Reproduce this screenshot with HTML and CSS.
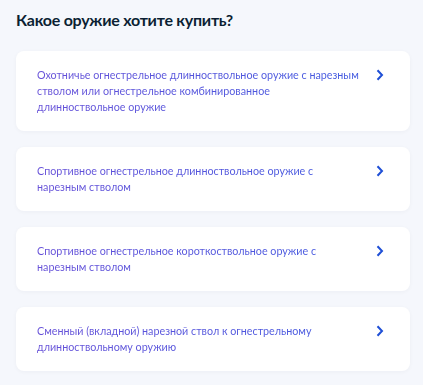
FILE: index.html
```html
<!DOCTYPE html>
<html lang="ru">
<head>
    <meta charset="UTF-8">
    <title>Какое оружие хотите купить?</title>
    <link rel="stylesheet" href="styles.css">
</head>
<body>
    <div class="page">
        <h1 class="title">Какое оружие хотите купить?</h1>
        <div class="options">
            <a class="option" href="#">
                <span class="option-text">Охотничье огнестрельное длинноствольное оружие с нарезным стволом или огнестрельное комбинированное длинноствольное оружие</span>
                <svg class="chevron" width="8" height="12" viewBox="0 0 8 12"><path d="M1.5 1.2 L6 6 L1.5 10.8" fill="none" stroke="#1f4fd6" stroke-width="2"/></svg>
            </a>
            <a class="option" href="#">
                <span class="option-text">Спортивное огнестрельное длинноствольное оружие с нарезным стволом</span>
                <svg class="chevron" width="8" height="12" viewBox="0 0 8 12"><path d="M1.5 1.2 L6 6 L1.5 10.8" fill="none" stroke="#1f4fd6" stroke-width="2"/></svg>
            </a>
            <a class="option" href="#">
                <span class="option-text">Спортивное огнестрельное короткоствольное оружие с нарезным стволом</span>
                <svg class="chevron" width="8" height="12" viewBox="0 0 8 12"><path d="M1.5 1.2 L6 6 L1.5 10.8" fill="none" stroke="#1f4fd6" stroke-width="2"/></svg>
            </a>
            <a class="option" href="#">
                <span class="option-text">Сменный (вкладной) нарезной ствол к огнестрельному длинноствольному оружию</span>
                <svg class="chevron" width="8" height="12" viewBox="0 0 8 12"><path d="M1.5 1.2 L6 6 L1.5 10.8" fill="none" stroke="#1f4fd6" stroke-width="2"/></svg>
            </a>
        </div>
    </div>
</body>
</html>
```
FILE: styles.css
```css
body {
    margin: 0;
    padding: 0;
    background-color: #f5f7fc;
    font-family: Lato, "Noto Sans", sans-serif;
    color: #0b1f33;
}

.page {
    padding: 9px 13px 14px 16px;
}

.title {
    margin: 0 0 20px 0;
    font-size: 16px;
    line-height: 22px;
    font-weight: 700;
    letter-spacing: -0.25px;
    color: #0b1f33;
}

.options {
    display: flex;
    flex-direction: column;
    gap: 16px;
}

.option {
    display: flex;
    align-items: flex-start;
    background: #fff;
    border-radius: 8px;
    padding: 16px 26px 16px 21px;
    text-decoration: none;
    box-shadow: 0 1px 4px rgba(11, 31, 51, 0.04);
}

.option-text {
    flex: 1;
    font-size: 10.75px;
    line-height: 16px;
    color: #5552dc;
    background: linear-gradient(90deg, #6650d8, #4159e0);
    -webkit-background-clip: text;
    background-clip: text;
    -webkit-text-fill-color: transparent;
}

.chevron {
    flex: none;
    margin-left: 17px;
    margin-top: 2px;
}
```
